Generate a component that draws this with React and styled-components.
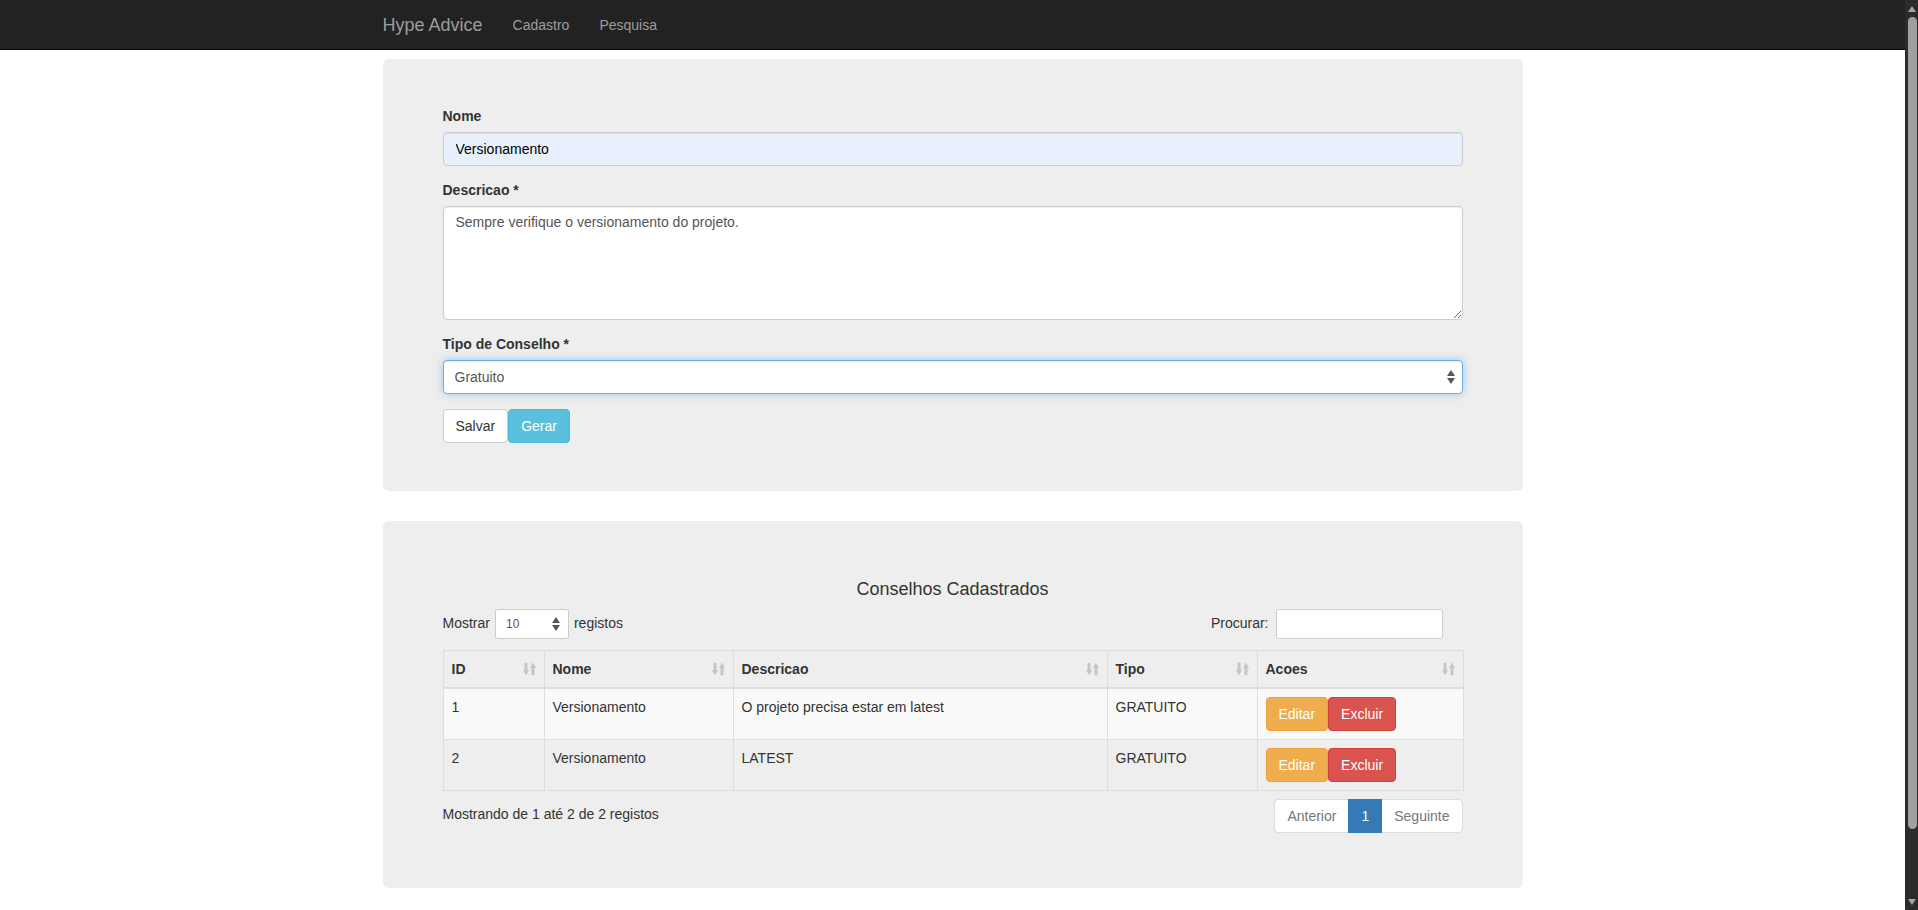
import styled, { createGlobalStyle } from "styled-components";

const GlobalStyle = createGlobalStyle`
  * {
    box-sizing: border-box;
  }

  body {
    margin: 0;
    background-color: #fff;
    color: #333;
    font-family: "Liberation Sans", Arial, sans-serif;
    font-size: 14px;
    line-height: 1.42857;
  }
`;

const rows = [
  { id: 1, nome: "Versionamento", descricao: "O projeto precisa estar em latest", tipo: "GRATUITO" },
  { id: 2, nome: "Versionamento", descricao: "LATEST", tipo: "GRATUITO" },
];

const columns = [
  { label: "ID", width: 101 },
  { label: "Nome", width: 189 },
  { label: "Descricao", width: 374 },
  { label: "Tipo", width: 150 },
  { label: "Acoes", width: 206 },
];

function SortIcon() {
  return (
    <StSortIcon width="13" height="13" viewBox="0 0 13 13">
      <rect x="1.5" y="0" width="3" height="8" />
      <polygon points="0,7.5 6,7.5 3,13" />
      <polygon points="7,5.5 13,5.5 10,0" />
      <rect x="8.5" y="5" width="3" height="8" />
    </StSortIcon>
  );
}

function SelectArrows({ small }) {
  return (
    <StSelectArrows $small={small} width="8" height="14" viewBox="0 0 8 14">
      <polygon points="0,6 8,6 4,0" />
      <polygon points="0,8 8,8 4,14" />
    </StSelectArrows>
  );
}

function ScrollArrow({ down }) {
  return (
    <StScrollButton>
      <svg width="8" height="6" viewBox="0 0 8 6">
        <polygon points={down ? "0,0 8,0 4,6" : "0,6 8,6 4,0"} fill="#a3a3a3" />
      </svg>
    </StScrollButton>
  );
}

function App() {
  return (
    <StPage>
      <GlobalStyle />
      <StMain>
        <StNavbar>
          <StNavContainer>
            <StBrand href="#">Hype Advice</StBrand>
            <StNavLink href="#">Cadastro</StNavLink>
            <StNavLink href="#">Pesquisa</StNavLink>
          </StNavContainer>
        </StNavbar>

        <StContainer>
          <StJumbotron as="form" onSubmit={(e) => e.preventDefault()}>
            <StFormGroup>
              <StLabel>Nome</StLabel>
              <StInput $autofill defaultValue="Versionamento" />
            </StFormGroup>
            <StFormGroup>
              <StLabel>Descricao *</StLabel>
              <StTextarea rows={5} defaultValue="Sempre verifique o versionamento do projeto." />
            </StFormGroup>
            <StFormGroup>
              <StLabel>Tipo de Conselho *</StLabel>
              <StSelectWrap>
                <StSelect $focused defaultValue="GRATUITO">
                  <option value="GRATUITO">Gratuito</option>
                  <option value="PAGO">Pago</option>
                </StSelect>
                <SelectArrows />
              </StSelectWrap>
            </StFormGroup>
            <div>
              <StButton type="submit" $variant="default">Salvar</StButton>
              <StButton type="button" $variant="info">Gerar</StButton>
            </div>
          </StJumbotron>

          <StJumbotron $last>
            <StTitle>Conselhos Cadastrados</StTitle>
            <StTableTools>
              <StLength>
                Mostrar
                <StSelectWrap $inline>
                  <StSmallSelect defaultValue="10">
                    <option value="10">10</option>
                    <option value="25">25</option>
                    <option value="50">50</option>
                  </StSmallSelect>
                  <SelectArrows small />
                </StSelectWrap>
                registos
              </StLength>
              <StFilter>
                Procurar:
                <StSearchInput type="search" />
              </StFilter>
            </StTableTools>

            <StTable>
              <thead>
                <tr>
                  {columns.map((col) => (
                    <StTh key={col.label} style={{ width: col.width }}>
                      {col.label}
                      <SortIcon />
                    </StTh>
                  ))}
                </tr>
              </thead>
              <tbody>
                {rows.map((row, index) => (
                  <StTr key={row.id} $striped={index % 2 === 0}>
                    <StTd>{row.id}</StTd>
                    <StTd>{row.nome}</StTd>
                    <StTd>{row.descricao}</StTd>
                    <StTd>{row.tipo}</StTd>
                    <StTd>
                      <StButton type="button" $variant="warning">Editar</StButton>
                      <StButton type="button" $variant="danger">Excluir</StButton>
                    </StTd>
                  </StTr>
                ))}
              </tbody>
            </StTable>

            <StTableFooter>
              <StInfo>Mostrando de 1 até 2 de 2 registos</StInfo>
              <StPagination>
                <StPageItem $disabled>Anterior</StPageItem>
                <StPageItem $active>1</StPageItem>
                <StPageItem $disabled>Seguinte</StPageItem>
              </StPagination>
            </StTableFooter>
          </StJumbotron>
        </StContainer>
      </StMain>

      <StScrollbar>
        <ScrollArrow />
        <StScrollThumb />
        <StScrollSpacer />
        <ScrollArrow down />
      </StScrollbar>
    </StPage>
  );
}

export default App;

const buttonColors = {
  default: { bg: "#fff", border: "#ccc", color: "#333" },
  info: { bg: "#5bc0de", border: "#46b8da", color: "#fff" },
  warning: { bg: "#f0ad4e", border: "#eea236", color: "#fff" },
  danger: { bg: "#d9534f", border: "#d43f3a", color: "#fff" },
};

const StPage = styled.div`
  display: flex;
  height: 910px;
  overflow: hidden;
`;

const StMain = styled.div`
  flex: 1;
  min-width: 0;
`;

const StScrollbar = styled.div`
  display: flex;
  flex-direction: column;
  width: 13px;
  height: 910px;
  background-color: #2b2b2b;
`;

const StScrollButton = styled.div`
  display: flex;
  justify-content: center;
  align-items: center;
  height: 17px;
  padding-left: 1px;
`;

const StScrollThumb = styled.div`
  width: 9px;
  height: 812px;
  margin-left: 3px;
  border-radius: 5px;
  background-color: #a0a0a0;
`;

const StScrollSpacer = styled.div`
  flex: 1;
`;

const StNavbar = styled.nav`
  height: 50px;
  background-color: #222;
  border-bottom: 1px solid #080808;
`;

const StNavContainer = styled.div`
  display: flex;
  align-items: center;
  width: 1170px;
  height: 49px;
  margin: 0 auto;
`;

const StBrand = styled.a`
  padding: 0 15px;
  font-size: 18px;
  line-height: 20px;
  color: #9d9d9d;
  text-decoration: none;
`;

const StNavLink = styled.a`
  padding: 0 15px;
  font-size: 14px;
  line-height: 20px;
  color: #9d9d9d;
  text-decoration: none;
`;

const StContainer = styled.div`
  width: 1170px;
  margin: 9px auto 0;
  padding: 0 15px;
`;

const StJumbotron = styled.div`
  display: block;
  margin-bottom: ${({ $last }) => ($last ? "0" : "30px")};
  padding: 48px 60px;
  border-radius: 6px;
  background-color: #eee;
`;

const StFormGroup = styled.div`
  margin-bottom: 15px;
`;

const StLabel = styled.label`
  display: block;
  margin-bottom: 5px;
  font-weight: 700;
`;

const StInput = styled.input`
  display: block;
  width: 100%;
  height: 34px;
  padding: 6px 12px;
  border: 1px solid #ccc;
  border-radius: 4px;
  background-color: ${({ $autofill }) => ($autofill ? "#e8f0fe" : "#fff")};
  color: ${({ $autofill }) => ($autofill ? "#000" : "#555")};
  font-family: inherit;
  font-size: 14px;
  box-shadow: inset 0 1px 1px rgba(0, 0, 0, 0.075);
  outline: none;
`;

const StTextarea = styled.textarea`
  display: block;
  width: 100%;
  height: 114px;
  padding: 6px 12px;
  border: 1px solid #ccc;
  border-radius: 4px;
  background-color: #fff;
  color: #555;
  font-family: inherit;
  font-size: 14px;
  line-height: 1.42857;
  box-shadow: inset 0 1px 1px rgba(0, 0, 0, 0.075);
  outline: none;
  resize: vertical;
`;

const StSelectWrap = styled.div`
  position: relative;
  display: ${({ $inline }) => ($inline ? "inline-block" : "block")};
  margin: ${({ $inline }) => ($inline ? "0 5px" : "0")};
  vertical-align: middle;
`;

const StSelect = styled.select`
  display: block;
  width: 100%;
  height: 34px;
  padding: 6px 11px;
  border: 1px solid ${({ $focused }) => ($focused ? "#66afe9" : "#ccc")};
  border-radius: 4px;
  background-color: #fff;
  color: #555;
  font-family: inherit;
  font-size: 14px;
  appearance: none;
  outline: none;
  box-shadow: ${({ $focused }) =>
    $focused
      ? "inset 0 1px 1px rgba(0,0,0,.075), 0 0 8px rgba(102,175,233,.6)"
      : "inset 0 1px 1px rgba(0,0,0,.075)"};
`;

const StSmallSelect = styled.select`
  display: block;
  width: 74px;
  height: 30px;
  padding: 5px 10px;
  border: 1px solid #ccc;
  border-radius: 3px;
  background-color: #fff;
  color: #555;
  font-family: inherit;
  font-size: 12px;
  appearance: none;
  outline: none;
`;

const StSelectArrows = styled.svg`
  position: absolute;
  top: 50%;
  right: ${({ $small }) => ($small ? "9px" : "8px")};
  transform: translateY(-50%);
  fill: #555;
  pointer-events: none;
`;

const StButton = styled.button`
  display: inline-block;
  height: 34px;
  padding: 6px 12px;
  border: 1px solid ${({ $variant }) => buttonColors[$variant].border};
  border-radius: 4px;
  background-color: ${({ $variant }) => buttonColors[$variant].bg};
  color: ${({ $variant }) => buttonColors[$variant].color};
  font-family: inherit;
  font-size: 14px;
  line-height: 20px;
  vertical-align: middle;
  cursor: pointer;
`;

const StTitle = styled.h4`
  margin: 10px 0 10px;
  font-size: 18px;
  font-weight: 400;
  line-height: 20px;
  text-align: center;
`;

const StTableTools = styled.div`
  display: flex;
  justify-content: space-between;
  align-items: center;
  height: 30px;
`;

const StLength = styled.label`
  display: flex;
  align-items: center;
  font-weight: 400;
`;

const StFilter = styled.label`
  display: flex;
  align-items: center;
  padding-right: 20px;
  font-weight: 400;
`;

const StSearchInput = styled.input`
  width: 167px;
  height: 30px;
  margin-left: 7px;
  padding: 5px 10px;
  border: 1px solid #ccc;
  border-radius: 3px;
  background-color: #fff;
  font-size: 12px;
  outline: none;
`;

const StTable = styled.table`
  width: 100%;
  margin-top: 11px;
  border-collapse: collapse;
  border-spacing: 0;
  table-layout: fixed;
  border: 1px solid #ddd;
`;

const StTh = styled.th`
  position: relative;
  padding: 8px 30px 8px 8px;
  border: 1px solid #ddd;
  border-bottom-width: 2px;
  font-weight: 700;
  line-height: 20px;
  text-align: left;
  vertical-align: bottom;
`;

const StSortIcon = styled.svg`
  position: absolute;
  top: 50%;
  right: 8px;
  transform: translateY(-50%);
  fill: #c6c6c6;
`;

const StTr = styled.tr`
  background-color: ${({ $striped }) => ($striped ? "#f9f9f9" : "transparent")};
`;

const StTd = styled.td`
  height: 51px;
  padding: 8px;
  border: 1px solid #ddd;
  line-height: 20px;
  vertical-align: top;
`;

const StTableFooter = styled.div`
  display: flex;
  justify-content: space-between;
  align-items: flex-start;
  margin-top: 6px;
  padding-bottom: 5px;
`;

const StInfo = styled.div`
  padding-top: 8px;
`;

const StPagination = styled.ul`
  display: flex;
  margin: 2px 0;
  padding: 0;
  list-style: none;

  & li:first-child {
    border-radius: 4px 0 0 4px;
  }

  & li:last-child {
    border-radius: 0 4px 4px 0;
  }
`;

const StPageItem = styled.li`
  margin-left: -1px;
  padding: 6px 12px;
  border: 1px solid ${({ $active }) => ($active ? "#337ab7" : "#ddd")};
  background-color: ${({ $active }) => ($active ? "#337ab7" : "#fff")};
  color: ${({ $active }) => ($active ? "#fff" : "#777")};
  line-height: 20px;
  position: relative;
  z-index: ${({ $active }) => ($active ? 2 : 0)};
`;
